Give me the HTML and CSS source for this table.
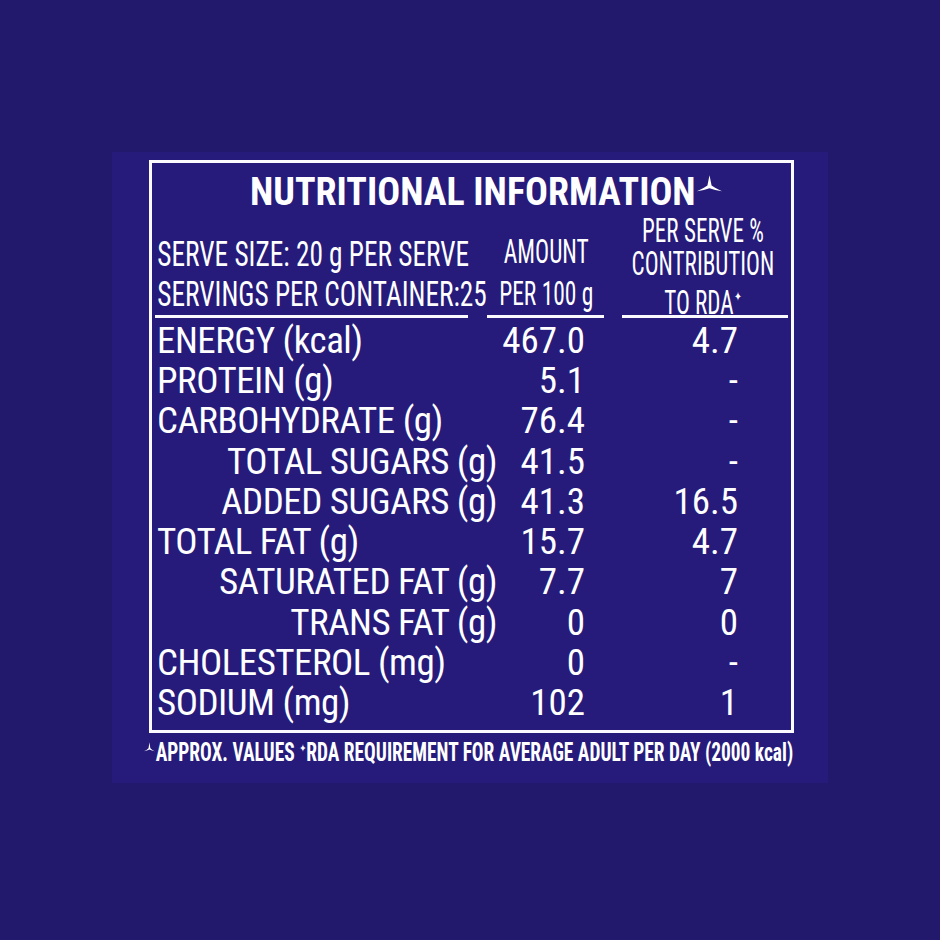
FILE: index.html
```html
<!DOCTYPE html>
<html>
<head>
<meta charset="utf-8">
<link rel="stylesheet" href="styles.css">
</head>
<body>
<div class="page">
  <div class="panel">
    <div class="box">
      <div class="title">NUTRITIONAL INFORMATION<svg class="approx" viewBox="0 0 24 16" width="25" height="17"><path d="M12 0 L14 10 Q18 13 24 15.5 Q17 14.5 12 12.5 Q7 14.5 0 15.5 Q6 13 10 10 Z" fill="#fff"/></svg></div>
      <div class="head">
        <div class="h1"><div class="sq">SERVE SIZE: 20 g PER SERVE<br>SERVINGS PER CONTAINER:25</div></div>
        <div class="h2"><div class="sq">AMOUNT<br>PER 100 g</div></div>
        <div class="h3"><div class="sq">PER SERVE %<br>CONTRIBUTION<br>TO RDA<span class="star">✦</span></div></div>
      </div>
      <div class="rules">
        <div class="rule r1"></div>
        <div class="rule r2"></div>
        <div class="rule r3"></div>
      </div>
      <div class="rows">
        <div class="lab">ENERGY (kcal)</div><div class="v1">467.0</div><div class="v2">4.7</div>
        <div class="lab">PROTEIN (g)</div><div class="v1">5.1</div><div class="v2">-</div>
        <div class="lab">CARBOHYDRATE (g)</div><div class="v1">76.4</div><div class="v2">-</div>
        <div class="lab sub">TOTAL SUGARS (g)</div><div class="v1">41.5</div><div class="v2">-</div>
        <div class="lab sub">ADDED SUGARS (g)</div><div class="v1">41.3</div><div class="v2">16.5</div>
        <div class="lab">TOTAL FAT (g)</div><div class="v1">15.7</div><div class="v2">4.7</div>
        <div class="lab sub">SATURATED FAT (g)</div><div class="v1">7.7</div><div class="v2">7</div>
        <div class="lab sub">TRANS FAT (g)</div><div class="v1">0</div><div class="v2">0</div>
        <div class="lab">CHOLESTEROL (mg)</div><div class="v1">0</div><div class="v2">-</div>
        <div class="lab">SODIUM (mg)</div><div class="v1">102</div><div class="v2">1</div>
      </div>
    </div>
    <div class="foot"><div class="foot-in"><svg class="approx-s" viewBox="0 0 24 16" width="14" height="10"><path d="M12 0 L14 10 Q18 13 24 15.5 Q17 14.5 12 12.5 Q7 14.5 0 15.5 Q6 13 10 10 Z" fill="#fff"/></svg>APPROX. VALUES <span class="star-s">✦</span>RDA REQUIREMENT FOR AVERAGE ADULT PER DAY (2000 kcal)</div></div>
  </div>
</div>
</body>
</html>
```

FILE: styles.css
```css
* { box-sizing: border-box; }
html, body { margin: 0; padding: 0; }
body {
  background: #22196d;
  width: 940px;
  height: 940px;
  overflow: hidden;
  font-family: "Roboto Condensed", "Liberation Sans", sans-serif;
  color: #fff;
}
.page {
  padding: 152px 0 0 112px;
}
.panel {
  width: 716px;
  height: 631px;
  background: #261b7b;
  padding: 8px 0 0 37px;
}
.box {
  width: 645px;
  height: 573px;
  border: 3px solid #fbfbff;
  padding: 7px 3px 0 3px;
}
.title {
  height: 44px;
  line-height: 44px;
  font-size: 38px;
  font-weight: bold;
  padding-left: 95px;
  white-space: nowrap;
}
.approx {
  vertical-align: top;
  margin-top: 5px;
  margin-left: 1px;
}
.head {
  display: grid;
  grid-template-columns: 335px 113px minmax(0, 1fr);
  align-items: end;
  height: 101px;
}
.head > div { min-width: 0; }
.sq {
  white-space: nowrap;
}
.h1 .sq {
  font-size: 35px;
  line-height: 40px;
  padding-left: 3px;
  margin-bottom: 11px;
  transform: scaleX(0.78);
  transform-origin: 0 50%;
}
.h2, .h3 {
  display: flex;
  justify-content: center;
}
.h2 .sq {
  width: max-content;
  flex: none;
  font-size: 34px;
  line-height: 42px;
  text-align: center;
  margin-bottom: 12px;
  transform: scaleX(0.69);
  transform-origin: 50% 50%;
}
.h3 {
  padding-left: 14px;
}
.h3 .sq {
  width: max-content;
  flex: none;
  font-size: 34px;
  line-height: 33px;
  text-align: center;
  margin-bottom: 7px;
  transform: scaleX(0.68);
  transform-origin: 50% 50%;
}
.star {
  font-family: "DejaVu Sans", sans-serif;
  font-size: 13px;
  vertical-align: 13px;
  margin-left: 1px;
}
.rules {
  display: flex;
  height: 3px;
}
.rule { background: #fbfbff; height: 3px; }
.r1 { width: 314px; }
.r2 { width: 117px; margin-left: 19px; }
.r3 { width: 166px; margin-left: 18px; }
.rows {
  display: grid;
  grid-template-columns: 342px 88px 1fr;
  grid-auto-rows: 40.3px;
  margin-top: 2px;
  align-items: center;
  font-size: 37px;
}
.lab { white-space: nowrap; padding-left: 2px; letter-spacing: -0.5px; }
.lab.sub { text-align: right; padding-left: 0; }
.v1 { text-align: right; }
.v2 { text-align: right; padding-right: 50px; }
.foot {
  margin-top: 3px;
  margin-left: -5px;
  height: 26px;
}
.foot-in {
  font-size: 25px;
  line-height: 26px;
  font-weight: bold;
  white-space: nowrap;
  transform: scaleX(0.776);
  transform-origin: 0 50%;
}
.approx-s { vertical-align: 9px; margin-right: 1px; }
.star-s {
  font-family: "DejaVu Sans", sans-serif;
  font-size: 11px;
  vertical-align: 9px;
}
```
